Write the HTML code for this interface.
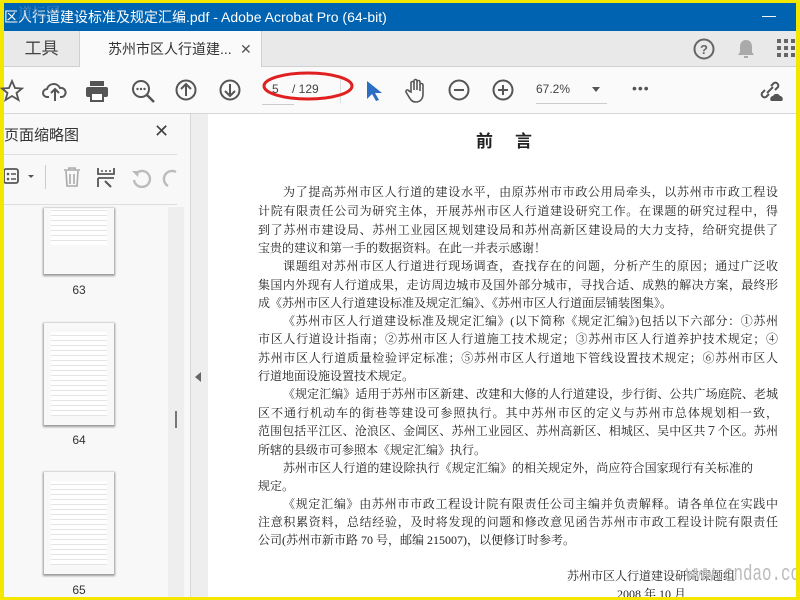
<!DOCTYPE html>
<html><head><meta charset="utf-8"><style>
*{margin:0;padding:0;box-sizing:border-box}
html,body{width:800px;height:600px;overflow:hidden}
body{background:#f5e600;position:relative;font-family:"Liberation Sans","Noto Sans CJK SC",sans-serif}
#wrap{position:absolute;left:0;top:0;width:800px;height:600px;overflow:hidden}
.a{position:absolute}
#title{left:4px;top:3px;width:792px;height:28px;background:#0063b1;color:#fff;font-size:14px;line-height:28px}
#tabs{left:4px;top:31px;width:792px;height:36px;background:#e9e9e9;border-bottom:1px solid #d0d0d0}
#tb{left:4px;top:67px;width:792px;height:47px;background:#fafafa;border-bottom:1px solid #d6d6d6}
#side{left:4px;top:114px;width:186px;height:483px;background:#f8f8f8;overflow:hidden}
#strip{left:190px;top:114px;width:18px;height:483px;background:#eeeeee;border-left:1px solid #d8d8d8}
#page{left:208px;top:114px;width:588px;height:483px;background:#fff;overflow:hidden}
.t{position:absolute;font-family:"Liberation Serif","Noto Serif CJK SC",serif;font-size:12px;color:#222;white-space:nowrap;left:50px;width:520px;text-align:justify;text-align-last:justify;overflow:hidden}
.l{text-align-last:left}
.th{position:absolute;background:#fff repeating-linear-gradient(#fff 0 3px,#e4e4e4 3px 4px,#fff 4px 5px);background-clip:content-box;padding:10px 8px;box-shadow:0 1px 2px #999;width:72px;height:68px;outline:0}
.num{position:absolute;font-size:12px;color:#333;width:72px;text-align:center}
svg{position:absolute}
</style></head><body><div id="wrap">
<div id="title" class="a">区人行道建设标准及规定汇编.pdf - Adobe Acrobat Pro (64-bit)<span style="position:absolute;right:20px;top:-2px">—</span></div>
<div class="a" style="left:18px;top:3px;color:#7a9ec4;font-size:14px;font-family:'Noto Serif CJK SC',serif;opacity:.7">道标网</div>
<div id="tabs" class="a">
 <div class="a" style="left:0;top:0;width:75px;height:36px;font-size:17px;color:#444;line-height:36px;text-align:center">工具</div>
 <div class="a" style="left:75px;top:0;width:183px;height:37px;background:#fafafa;border-left:1px solid #d0d0d0;border-right:1px solid #d0d0d0;font-size:14px;color:#333;line-height:36px;padding-left:28px">苏州市区人行道建...<span style="position:absolute;left:160px;font-size:14px;color:#555">✕</span></div>
 <svg style="left:689px;top:7px" width="22" height="22"><circle cx="11" cy="11" r="9.5" fill="none" stroke="#666" stroke-width="2"/><text x="11" y="16" font-size="13" font-weight="bold" text-anchor="middle" fill="#666" font-family="Liberation Sans">?</text></svg>
 <svg style="left:733px;top:8px" width="18" height="20"><path d="M9 1c-4 0-6 3-6 7v5l-2 3h16l-2-3V8c0-4-2-7-6-7z" fill="#aaa"/><rect x="7" y="17" width="4" height="2" fill="#aaa"/></svg>
 <svg style="left:773px;top:8px" width="20" height="20" fill="#666"><rect x="0" y="0" width="4" height="4"/><rect x="7" y="0" width="4" height="4"/><rect x="14" y="0" width="4" height="4"/><rect x="0" y="7" width="4" height="4"/><rect x="7" y="7" width="4" height="4"/><rect x="14" y="7" width="4" height="4"/><rect x="0" y="14" width="4" height="4"/><rect x="7" y="14" width="4" height="4"/><rect x="14" y="14" width="4" height="4"/></svg>
</div>
<div id="tb" class="a">
 <svg style="left:-4px;top:12px" width="24" height="24"><path d="M12 2l3 7 7 .5-5.5 4.5 2 7L12 17l-6.5 4 2-7L2 9.5 9 9z" fill="none" stroke="#555" stroke-width="1.8"/></svg>
 <svg style="left:38px;top:12px" width="26" height="24"><path d="M7 18H5a4 4 0 0 1 0-8 7 7 0 0 1 13-1 4.5 4.5 0 0 1 2 9h-2M13 22V11M9 14l4-4 4 4" fill="none" stroke="#555" stroke-width="2"/></svg>
 <svg style="left:81px;top:12px" width="24" height="24"><rect x="5" y="2" width="14" height="5" fill="#555"/><rect x="1" y="8" width="22" height="10" rx="2" fill="#555"/><rect x="6" y="14" width="12" height="8" fill="#fff" stroke="#555" stroke-width="2"/></svg>
 <svg style="left:127px;top:12px" width="26" height="26"><circle cx="10" cy="10" r="8" fill="none" stroke="#555" stroke-width="2"/><path d="M16 16l7 7" stroke="#555" stroke-width="2.5"/><circle cx="6.5" cy="10" r="1.2" fill="#555"/><circle cx="10" cy="10" r="1.2" fill="#555"/><circle cx="13.5" cy="10" r="1.2" fill="#555"/></svg>
 <svg style="left:171px;top:12px" width="24" height="24"><circle cx="11" cy="11" r="9.5" fill="none" stroke="#555" stroke-width="2"/><path d="M11 17V5M6 10l5-5 5 5" fill="none" stroke="#555" stroke-width="2"/></svg>
 <svg style="left:215px;top:12px" width="24" height="24"><circle cx="11" cy="11" r="9.5" fill="none" stroke="#555" stroke-width="2"/><path d="M11 5v12M6 12l5 5 5-5" fill="none" stroke="#555" stroke-width="2"/></svg>
 <div class="a" style="left:258px;top:37px;width:32px;border-bottom:1px solid #ccc"></div>
 <div class="a" style="left:268px;top:15px;font-size:12px;color:#444">5&nbsp;&nbsp;&nbsp;&nbsp;/ 129</div>
 <div class="a" style="left:336px;top:10px;width:1px;height:26px;background:#ddd"></div>
 <svg style="left:256px;top:2px" width="96" height="36"><ellipse cx="48" cy="17" rx="44" ry="13" fill="none" stroke="#e02020" stroke-width="3"/></svg>
 <svg style="left:362px;top:13px" width="16" height="22"><path d="M1 1v18l5-5 4 7 3-1-4-7h7z" fill="#2b6ec4"/></svg>
 <svg style="left:400px;top:11px" width="26" height="26"><path d="M7 14V5a1.5 1.5 0 0 1 3 0v7V3a1.5 1.5 0 0 1 3 0v9V4a1.5 1.5 0 0 1 3 0v9V7a1.5 1.5 0 0 1 3 0v9c0 5-3 8-7 8s-5-2-7-5l-3-5a1.5 1.5 0 0 1 3-1z" fill="none" stroke="#555" stroke-width="1.6"/></svg>
 <svg style="left:444px;top:12px" width="24" height="24"><circle cx="11" cy="11" r="9.5" fill="none" stroke="#555" stroke-width="2"/><path d="M6 11h10" stroke="#555" stroke-width="2"/></svg>
 <svg style="left:488px;top:12px" width="24" height="24"><circle cx="11" cy="11" r="9.5" fill="none" stroke="#555" stroke-width="2"/><path d="M6 11h10M11 6v10" stroke="#555" stroke-width="2"/></svg>
 <div class="a" style="left:532px;top:15px;font-size:12px;color:#444">67.2%</div>
 <div class="a" style="left:588px;top:20px;border:4px solid transparent;border-top:5px solid #555"></div>
 <div class="a" style="left:532px;top:36px;width:71px;border-bottom:1px solid #ccc"></div>
 <div class="a" style="left:628px;top:13px;font-size:14px;color:#555;letter-spacing:1px">•••</div>
 <svg style="left:754px;top:12px" width="26" height="24"><path d="M9 14l6-6M7 11l-3 3a3 3 0 0 0 4 4l3-3M17 11l3-3a3 3 0 0 0-4-4l-3 3" fill="none" stroke="#555" stroke-width="2"/><path d="M13 22h11a3 3 0 0 0-2-5 4 4 0 0 0-7 0 3 3 0 0 0-2 5z" fill="#555"/></svg>
</div>
<div id="side" class="a">
 <div class="a" style="left:0;top:10px;font-size:15px;color:#333">页面缩略图</div>
 <div class="a" style="left:150px;top:7px;font-size:18px;color:#444">✕</div>
 <div class="a" style="left:0;top:40px;width:173px;border-bottom:1px solid #ddd"></div>
 <div class="a" style="left:0;top:90px;width:173px;border-bottom:1px solid #ddd"></div>
 <svg style="left:0;top:53px" width="40" height="20"><rect x="0" y="2" width="14" height="14" rx="2" fill="none" stroke="#555" stroke-width="1.8"/><circle cx="4" cy="7" r="1.3" fill="#555"/><circle cx="4" cy="12" r="1.3" fill="#555"/><path d="M7 7h5M7 12h5" stroke="#555" stroke-width="1.5"/><path d="M24 8l3 3 3-3z" fill="#555"/></svg>
 <div class="a" style="left:41px;top:51px;width:1px;height:24px;background:#ccc"></div>
 <svg style="left:58px;top:52px" width="20" height="22"><path d="M2 4h16M7 4V2h6v2M4 5l1 15h10l1-15M8 8v10M12 8v10" fill="none" stroke="#aaa" stroke-width="1.6"/></svg>
 <svg style="left:92px;top:52px" width="20" height="22"><path d="M2 2v6h16V2M2 12v9M2 12h16" fill="none" stroke="#555" stroke-width="1.8"/><path d="M5 5h2M9 5h2M13 5h2" stroke="#555" stroke-width="1.5"/><path d="M9 15l6 6" stroke="#555" stroke-width="2"/></svg>
 <svg style="left:126px;top:52px" width="50" height="22"><path d="M8 6a8 8 0 1 1-4 8" fill="none" stroke="#bbb" stroke-width="2.4"/><path d="M2 5l7 0-1 6z" fill="#bbb"/><path d="M46 6a8 8 0 0 0-8 14" fill="none" stroke="#bbb" stroke-width="2.4"/></svg>
 <div class="a" style="left:164px;top:93px;width:16px;height:390px;background:#eee"></div>
 <div class="a" style="left:171px;top:297px;width:2px;height:17px;background:#777"></div>
 <div class="th" style="left:39px;top:93px;height:68px;padding-top:2px;padding-bottom:30px"></div>
 <div class="num" style="left:39px;top:169px">63</div>
 <div class="th" style="left:39px;top:208px;height:104px"></div>
 <div class="num" style="left:39px;top:319px">64</div>
 <div class="th" style="left:39px;top:357px;height:104px"></div>
 <div class="num" style="left:39px;top:469px">65</div>
</div>
<div id="strip" class="a"><div class="a" style="left:4px;top:258px;border:5px solid transparent;border-right:6px solid #666;border-left:0"></div></div>
<div id="page" class="a">
<div class="a" style="left:268px;top:13px;font-family:'Noto Sans CJK SC',sans-serif;font-weight:bold;font-size:17px;color:#222;letter-spacing:22px;white-space:nowrap">前言</div>
<div class="t" style="top:69px;left:75px;width:495px">为了提高苏州市区人行道的建设水平，由原苏州市市政公用局牵头，以苏州市市政工程设</div>
<div class="t" style="top:88px">计院有限责任公司为研究主体，开展苏州市区人行道建设研究工作。在课题的研究过程中，得</div>
<div class="t" style="top:107px">到了苏州市建设局、苏州工业园区规划建设局和苏州高新区建设局的大力支持，给研究提供了</div>
<div class="t l" style="top:125px">宝贵的建议和第一手的数据资料。在此一并表示感谢！</div>
<div class="t" style="top:143px;left:75px;width:495px">课题组对苏州市区人行道进行现场调查，查找存在的问题，分析产生的原因；通过广泛收</div>
<div class="t" style="top:162px">集国内外现有人行道成果，走访周边城市及国外部分城市，寻找合适、成熟的解决方案，最终形</div>
<div class="t l" style="top:180px">成《苏州市区人行道建设标准及规定汇编》、《苏州市区人行道面层铺装图集》。</div>
<div class="t" style="top:198px;left:75px;width:495px">《苏州市区人行道建设标准及规定汇编》(以下简称《规定汇编》)包括以下六部分：①苏州</div>
<div class="t" style="top:216px">市区人行道设计指南；②苏州市区人行道施工技术规定；③苏州市区人行道养护技术规定；④</div>
<div class="t" style="top:235px">苏州市区人行道质量检验评定标准；⑤苏州市区人行道地下管线设置技术规定；⑥苏州市区人</div>
<div class="t l" style="top:253px">行道地面设施设置技术规定。</div>
<div class="t" style="top:271px;left:75px;width:495px">《规定汇编》适用于苏州市区新建、改建和大修的人行道建设，步行街、公共广场庭院、老城</div>
<div class="t" style="top:290px">区不通行机动车的街巷等建设可参照执行。其中苏州市区的定义与苏州市总体规划相一致，</div>
<div class="t" style="top:308px">范围包括平江区、沧浪区、金阊区、苏州工业园区、苏州高新区、相城区、吴中区共７个区。苏州</div>
<div class="t l" style="top:327px">所辖的县级市可参照本《规定汇编》执行。</div>
<div class="t" style="top:345px;left:75px;width:470px">苏州市区人行道的建设除执行《规定汇编》的相关规定外，尚应符合国家现行有关标准的</div>
<div class="t l" style="top:363px">规定。</div>
<div class="t" style="top:381px;left:75px;width:495px">《规定汇编》由苏州市市政工程设计院有限责任公司主编并负责解释。请各单位在实践中</div>
<div class="t" style="top:399px">注意积累资料，总结经验，及时将发现的问题和修改意见函告苏州市市政工程设计院有限责任</div>
<div class="t l" style="top:417px">公司(苏州市新市路 70 号，邮编 215007)，以便修订时参考。</div>
<div class="t l" style="top:453px;left:359px;width:200px">苏州市区人行道建设研究课题组</div>
<div class="t l" style="top:471px;left:409px;width:120px">2008 年 10 月</div>
<div class="a" style="left:478px;top:448px;font-family:'Liberation Mono',monospace;font-size:22px;color:#bbb;white-space:nowrap;transform:scaleX(.72);transform-origin:0 0">www.cndao.com</div>
</div>
</div></body></html>
